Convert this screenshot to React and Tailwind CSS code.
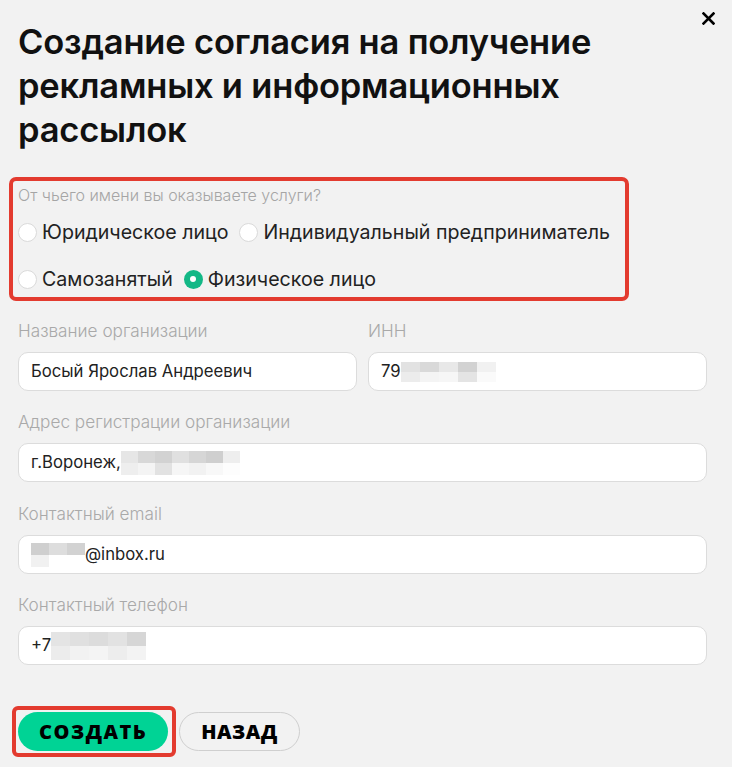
import React from "react";

// пикселизированная «замазка» персональных данных
function Blur({ cells, size = "w-[16px] h-[10px]" }) {
  return (
    <div className="inline-flex flex-col align-middle">
      {cells.map((row, i) => (
        <div key={i} className="flex">
          {row.map((c, j) => (
            <div key={j} className={size} style={{ background: c }} />
          ))}
        </div>
      ))}
    </div>
  );
}

function Radio({ checked, label }) {
  return (
    <label className="flex items-center gap-[5px] cursor-pointer">
      {checked ? (
        <span className="w-[19px] h-[19px] rounded-full bg-[#13b886] flex items-center justify-center">
          <span className="w-[6px] h-[6px] rounded-full bg-white" />
        </span>
      ) : (
        <span className="w-[19px] h-[19px] rounded-full bg-white border border-[#dadada]" />
      )}
      <span className="text-[19.6px] leading-[28px] text-[#222]">{label}</span>
    </label>
  );
}

function Field({ label, children, className = "" }) {
  return (
    <div className={className}>
      <div className="text-[17.2px] leading-[20px] font-light text-[#a9a9a9]">{label}</div>
      <div className="mt-[11px] h-[39px] bg-white border border-[#dcdcdc] rounded-[10px] px-[12px] flex items-center text-[16.7px] text-[#222]">
        {children}
      </div>
    </div>
  );
}

export default function App() {
  return (
    <div className="min-h-screen bg-[#f2f2f2] relative font-['Inter',sans-serif]">
      {/* закрыть */}
      <button className="absolute right-[16px] top-[11px] p-[1px]">
        <svg width="13" height="13" viewBox="0 0 13 13">
          <path d="M1.5 1.5 L11.5 11.5 M11.5 1.5 L1.5 11.5" stroke="#000" strokeWidth="2.6" strokeLinecap="square" />
        </svg>
      </button>

      <div className="px-[18px] pt-[20px] pb-[15px]">
        <h1 className="text-[34.5px] leading-[44px] font-semibold text-[#111] tracking-[-0.2px]">
          Создание согласия на получение
          <br />
          рекламных и информационных
          <br />
          рассылок
        </h1>

        {/* выбор статуса */}
        <div className="-ml-[9px] mt-[25px] w-[620px] border-4 border-[#e33b2f] rounded-[7px] px-[5px] pt-[4px] pb-[4px]">
          <div className="text-[16px] leading-[20px] font-light text-[#a5a5a5]">
            От чьего имени вы оказываете услуги?
          </div>
          <div className="mt-[13px] flex gap-[11px]">
            <Radio label="Юридическое лицо" />
            <Radio label="Индивидуальный предприниматель" />
          </div>
          <div className="mt-[19px] flex gap-[11px]">
            <Radio label="Самозанятый" />
            <Radio checked label="Физическое лицо" />
          </div>
        </div>

        <div className="mt-[20px] grid grid-cols-2 gap-x-[11px] w-[689px]">
          <Field label="Название организации">Босый Ярослав Андреевич</Field>
          <Field label="ИНН">
            <span>79</span>
            <Blur
              cells={[
                ["#e2e2e2", "#d9d9d9", "#e8e8e8", "#d2d2d2", "#f1f1f1"],
                ["#ececec", "#f4f4f4", "#f6f6f6", "#e4e4e4", "#fafafa"],
              ]}
              size="w-[19px] h-[10px]"
            />
          </Field>
        </div>

        <Field label="Адрес регистрации организации" className="mt-[21px] w-[689px]">
          <span>г.Воронеж,</span>
          <Blur
            cells={[
              ["#e6e6e6", "#d8d8d8", "#d2d2d2", "#e0e0e0", "#d6d6d6", "#cfcfcf", "#eeeeee"],
              ["#eeeeee", "#f4f4f4", "#e2e2e2", "#f6f6f6", "#f2f2f2", "#f8f8f8", "#fdfdfd"],
            ]}
            size="w-[17px] h-[12px]"
          />
        </Field>

        <Field label="Контактный email" className="mt-[22px] w-[689px]">
          <Blur
            cells={[
              ["#cfcfcf", "#dddddd", "#d2d2d2"],
              ["#f1f1f1", "#ffffff", "#ffffff"],
            ]}
            size="w-[18px] h-[12px]"
          />
          <span>@inbox.ru</span>
        </Field>

        <Field label="Контактный телефон" className="mt-[21px] w-[689px]">
          <span>+7</span>
          <Blur
            cells={[
              ["#e4e4e4", "#e0e0e0", "#dcdcdc", "#e2e2e2", "#d6d6d6"],
              ["#ececec", "#f2f2f2", "#f4f4f4", "#ededed", "#f3f3f3"],
            ]}
            size="w-[19px] h-[14px]"
          />
        </Field>

        {/* кнопки */}
        <div className="mt-[41px] flex items-center gap-[3px] font-['Open_Sans',sans-serif]">
          <div className="-ml-[6px] border-4 border-[#e33b2f] rounded-[6px] p-[2px] pr-[4px]">
            <button className="h-[39px] pl-[21px] pr-[21px] rounded-full bg-[#00d395] text-[20px] font-extrabold tracking-[1.5px] text-black">
              СОЗДАТЬ
            </button>
          </div>
          <button className="h-[39px] pl-[21px] pr-[21px] rounded-full border border-[#cfcfcf] text-[20px] font-extrabold tracking-[0.5px] text-black">
            НАЗАД
          </button>
        </div>
      </div>
    </div>
  );
}
